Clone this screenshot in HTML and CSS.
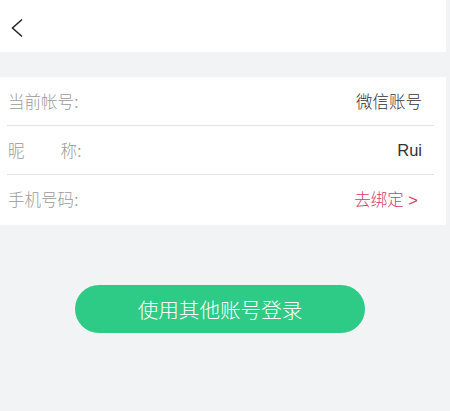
FILE: index.html
```html
<!DOCTYPE html>
<html lang="zh-CN">
<head>
<meta charset="utf-8">
<link rel="stylesheet" href="styles.css">
</head>
<body>
<div class="page">
  <div class="header">
    <svg class="back" width="14" height="20" viewBox="0 0 14 20"><path d="M12 1.5 L2.5 10 L12 18.5" fill="none" stroke="#222" stroke-width="1.5"/></svg>
  </div>
  <div class="spacer"></div>
  <div class="card">
    <div class="row"><span class="label">当前帐号:</span><span class="value">微信账号</span></div>
    <div class="row"><span class="label">昵<span class="sp"></span>称:</span><span class="value">Rui</span></div>
    <div class="row last"><span class="label">手机号码:</span><span class="value red">去绑定 &gt;</span></div>
  </div>
  <div class="btn-wrap"><div class="btn">使用其他账号登录</div></div>
</div>
</body>
</html>
```
FILE: styles.css
```css
html, body {
  margin: 0;
  padding: 0;
  background: #f2f3f4;
  font-family: "Liberation Sans", "Noto Sans CJK SC", sans-serif;
  font-weight: 300;
}
.page {
  width: 450px;
  height: 411px;
}
.header {
  width: 446px;
  height: 52px;
  background: #fff;
  display: flex;
  align-items: center;
}
.back {
  margin-left: 10px;
  margin-top: 4px;
}
.spacer {
  height: 25px;
}
.card {
  width: 446px;
  box-sizing: border-box;
  background: #fff;
  padding: 0 12px 0 7px;
}
.row {
  height: 48px;
  border-bottom: 1px solid #e3e3e3;
  display: flex;
  align-items: center;
  justify-content: space-between;
  padding: 0 12px 0 1px;
  font-size: 16.5px;
}
.row.last {
  height: 48px;
  padding-bottom: 2px;
  border-bottom: none;
}
.label {
  color: #9a9a9a;
  display: flex;
  align-items: center;
}
.sp {
  display: inline-block;
  width: 36px;
}
.value {
  color: #333;
}
.value.red {
  color: #d43b68;
  margin-right: 4px;
}
.btn-wrap {
  padding: 60px 0 0 75px;
}
.btn {
  width: 290px;
  height: 48px;
  border-radius: 24px;
  background: #2ecb87;
  color: #fff;
  font-size: 20.6px;
  display: flex;
  align-items: center;
  justify-content: center;
}
```
